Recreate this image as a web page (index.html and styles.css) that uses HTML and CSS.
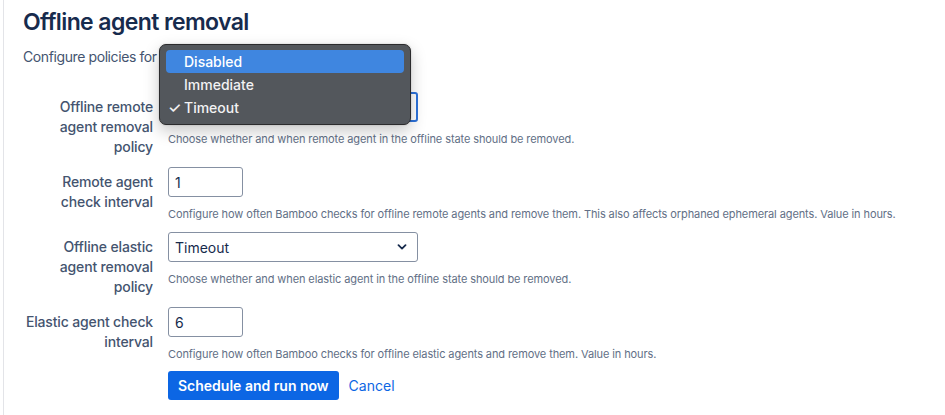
FILE: index.html
```html
<!DOCTYPE html>
<html lang="en">
<head>
<meta charset="utf-8">
<title>Offline agent removal</title>
<link rel="stylesheet" href="styles.css">
</head>
<body>
<div class="page">
  <h1 class="title">Offline agent removal</h1>
  <p class="intro">Configure policies for removing offline agents.</p>
  <form class="form">
    <div class="row">
      <label class="label" for="remote-policy">Offline remote agent removal policy</label>
      <div class="field">
        <div class="select-wrap">
          <select id="remote-policy" class="select select-focus">
            <option>Disabled</option>
            <option>Immediate</option>
            <option selected>Timeout</option>
          </select>
          <svg class="chev" width="10" height="6" viewBox="0 0 10 6"><path d="M1.5 1.2 5 4.6 8.5 1.2" fill="none" stroke="#172B4D" stroke-width="1.8" stroke-linecap="round" stroke-linejoin="round"/></svg>
          <div class="menu">
            <div class="menu-item active">Disabled</div>
            <div class="menu-item">Immediate</div>
            <div class="menu-item"><span class="check">✓</span>Timeout</div>
          </div>
        </div>
        <div class="desc">Choose whether and when remote agent in the offline state should be removed.</div>
      </div>
    </div>
    <div class="row">
      <label class="label" for="remote-interval">Remote agent check interval</label>
      <div class="field">
        <input id="remote-interval" class="input" type="text" value="1">
        <div class="desc">Configure how often Bamboo checks for offline remote agents and remove them. This also affects orphaned ephemeral agents. Value in hours.</div>
      </div>
    </div>
    <div class="row">
      <label class="label" for="elastic-policy">Offline elastic agent removal policy</label>
      <div class="field">
        <div class="select-wrap">
          <select id="elastic-policy" class="select">
            <option>Disabled</option>
            <option>Immediate</option>
            <option selected>Timeout</option>
          </select>
          <svg class="chev" width="10" height="6" viewBox="0 0 10 6"><path d="M1.5 1.2 5 4.6 8.5 1.2" fill="none" stroke="#172B4D" stroke-width="1.8" stroke-linecap="round" stroke-linejoin="round"/></svg>
        </div>
        <div class="desc">Choose whether and when elastic agent in the offline state should be removed.</div>
      </div>
    </div>
    <div class="row">
      <label class="label" for="elastic-interval">Elastic agent check interval</label>
      <div class="field">
        <input id="elastic-interval" class="input" type="text" value="6">
        <div class="desc">Configure how often Bamboo checks for offline elastic agents and remove them. Value in hours.</div>
      </div>
    </div>
    <div class="row">
      <div></div>
      <div class="actions">
        <button type="button" class="btn-primary">Schedule and run now</button>
        <a class="link" href="#">Cancel</a>
      </div>
    </div>
  </form>
</div>
</body>
</html>
```

FILE: styles.css
```css
html, body {
  margin: 0;
  padding: 0;
  background: #ffffff;
}
body {
  font-family: Inter, "Noto Sans", "Liberation Sans", sans-serif;
  color: #172B4D;
}
.page {
  margin-left: 3px;
  border-left: 1px solid #e3e4e8;
  padding-left: 19px;
  padding-top: 1px;
  min-height: 415px;
  box-sizing: border-box;
}
.title {
  margin: 7px 0 0;
  font-size: 23px;
  line-height: 28px;
  font-weight: 600;
  color: #172B4D;
  letter-spacing: -0.6px;
}
.intro {
  margin: 11px 0 0;
  font-size: 14px;
  line-height: 20px;
  color: #44546F;
  letter-spacing: -0.4px;
}
.form {
  margin-top: 25px;
}
.row {
  display: grid;
  grid-template-columns: 130px 1fr;
  column-gap: 15px;
  margin-bottom: 10px;
}
.label {
  text-align: right;
  padding-top: 5px;
  font-size: 14px;
  line-height: 20px;
  font-weight: 500;
  color: #44546F;
  letter-spacing: -0.15px;
}
.field {
  display: flex;
  flex-direction: column;
  align-items: flex-start;
}
.select-wrap {
  position: relative;
  width: 250px;
}
.select {
  appearance: none;
  -webkit-appearance: none;
  display: block;
  box-sizing: border-box;
  width: 250px;
  height: 30px;
  border: 1px solid #8590A2;
  border-radius: 3px;
  background: #ffffff;
  padding: 0 6px;
  font-family: inherit;
  font-size: 14px;
  color: #172B4D;
}
.select-focus {
  border: 2px solid #2D72DA;
}
.chev {
  position: absolute;
  right: 11px;
  top: 12px;
}
.input {
  box-sizing: border-box;
  width: 75px;
  height: 30px;
  border: 1px solid #8590A2;
  border-radius: 3px;
  padding: 0 6px;
  font-family: inherit;
  font-size: 14px;
  color: #172B4D;
  background: #ffffff;
}
.desc {
  margin-top: 9px;
  font-size: 11px;
  line-height: 16px;
  color: #626F86;
  white-space: nowrap;
  letter-spacing: -0.1px;
}
.menu {
  position: absolute;
  left: -9px;
  top: -48px;
  width: 252px;
  box-sizing: border-box;
  padding: 5px 6px;
  background: #53575C;
  border: 1px solid #2b2b2d;
  border-radius: 7px;
  box-shadow: 0 6px 16px rgba(0, 0, 0, 0.22), 0 0 2px rgba(0, 0, 0, 0.2);
  z-index: 5;
}
.menu-item {
  position: relative;
  height: 23px;
  line-height: 23px;
  padding-left: 18px;
  border-radius: 4px;
  font-size: 14px;
  font-weight: 500;
  color: #f2f2f3;
}
.menu-item.active {
  background: #3F86E0;
  color: #ffffff;
}
.check {
  position: absolute;
  left: 2px;
  top: 0;
  font-size: 15px;
}
.actions {
  display: flex;
  align-items: center;
  gap: 10px;
  margin-top: -1px;
}
.btn-primary {
  height: 29px;
  padding: 0 10px;
  border: none;
  border-radius: 3px;
  background: #0C66E4;
  color: #ffffff;
  font-family: inherit;
  font-size: 14px;
  font-weight: 600;
}
.link {
  color: #0C66E4;
  font-size: 14px;
  text-decoration: none;
}
```
